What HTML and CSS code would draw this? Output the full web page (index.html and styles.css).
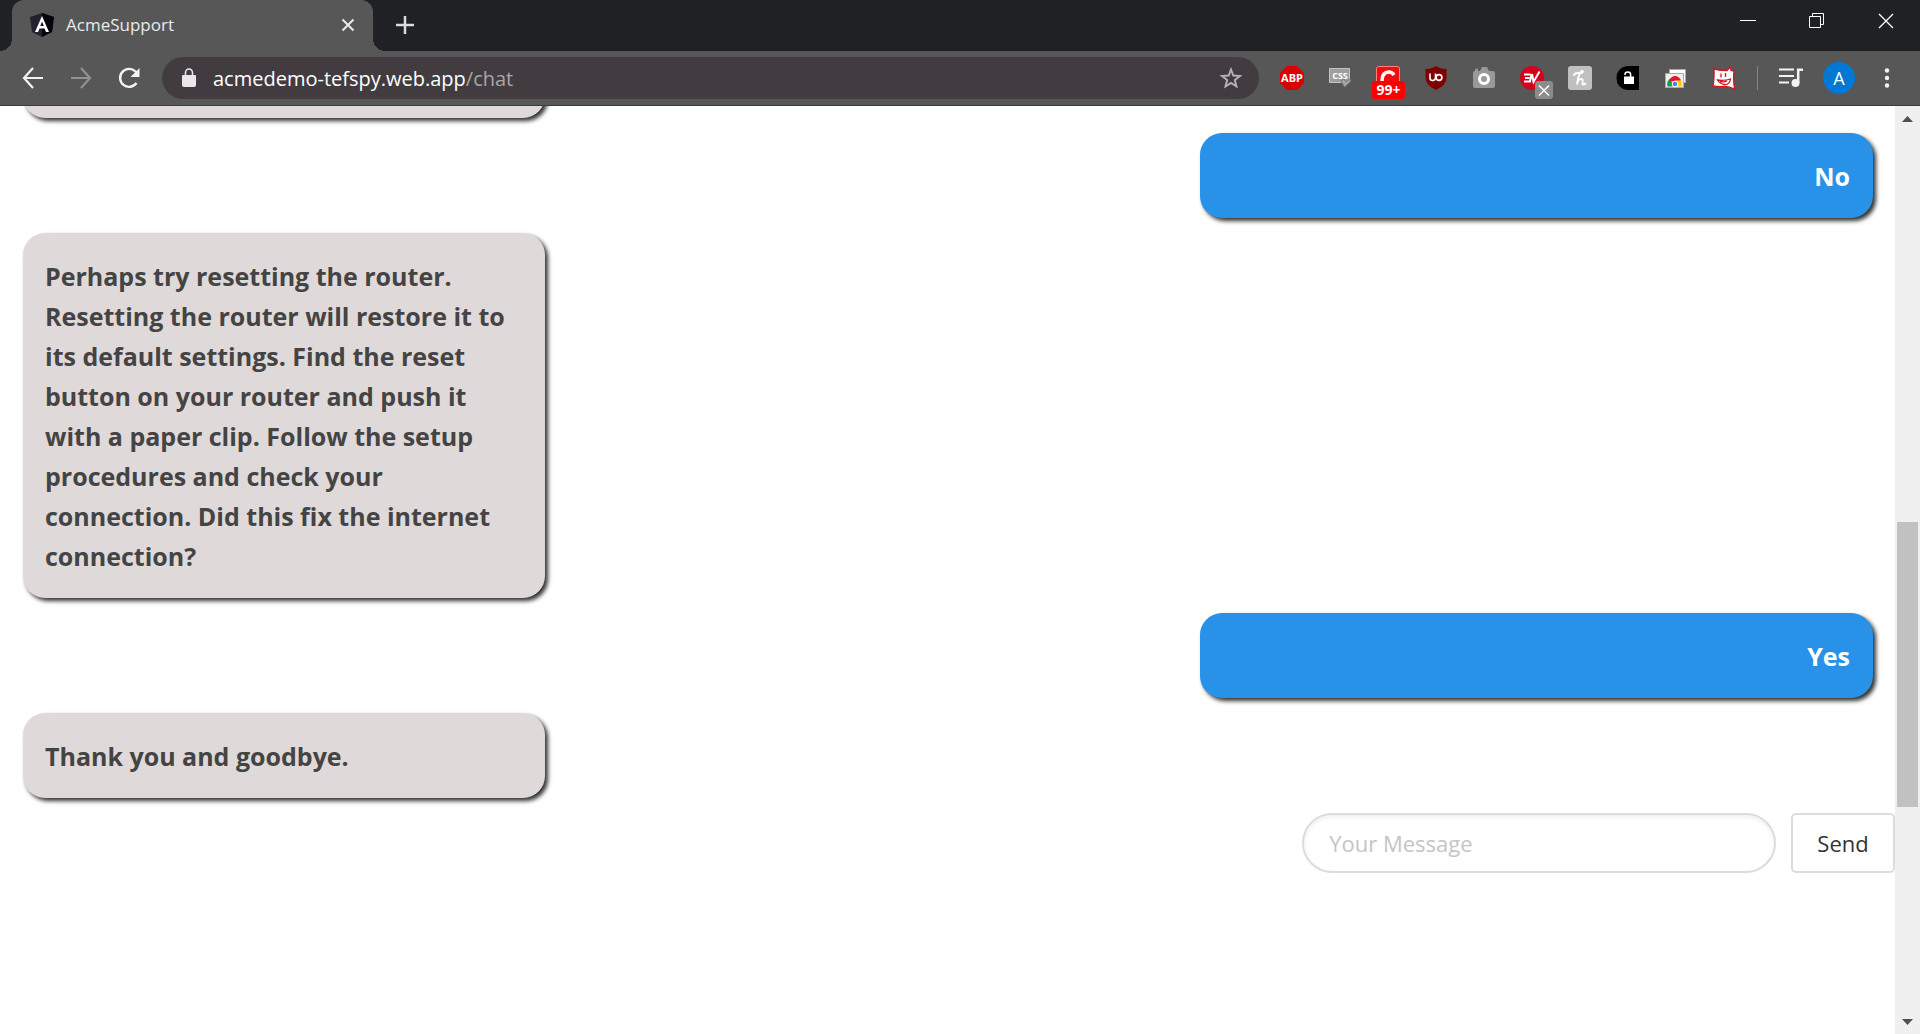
FILE: index.html
```html
<!DOCTYPE html>
<html lang="en">
<head>
<meta charset="utf-8">
<title>AcmeSupport</title>
<link rel="stylesheet" href="styles.css">
</head>
<body>
<header class="browser">
  <div class="tabstrip">
    <div class="tab">
      <svg class="icon" viewBox="0 0 24 24"><path d="M12 0 24 4 22 19 12 24 2 19 0 4z" fill="#23232f"/><path d="M12 0 24 4 22 19 12 24z" fill="#05050f"/><path d="M12 3 19 19h-3l-1.500-3.500h-5L8 19H5zM12 8.500 10.200 13h3.600z" fill="#fff" fill-rule="evenodd"/></svg>
      <span class="tab-title">AcmeSupport</span>
      <button class="plain" aria-label="Close tab"><svg class="icon" viewBox="0 0 24 24"><path d="M6.500 6.500l11 11M17.500 6.500l-11 11" stroke="#e8eaed" stroke-width="2" fill="none"/></svg></button>
    </div>
    <button class="plain new-tab" aria-label="New tab"><svg class="icon" viewBox="0 0 24 24"><path d="M12 3v18M3 12h18" stroke="#dadce0" stroke-width="2.500" fill="none"/></svg></button>
    <div class="window-controls">
      <button class="plain" aria-label="Minimize"><svg class="icon" viewBox="0 0 24 24"><path d="M4 11.500h16" stroke="#fff" fill="none"/></svg></button>
      <button class="plain" aria-label="Restore"><svg class="icon" viewBox="0 0 24 24"><path d="M4.500 7.500h11v11h-11zM7.500 7V4.500h11v11H16" stroke="#fff" fill="none"/></svg></button>
      <button class="plain" aria-label="Close"><svg class="icon" viewBox="0 0 24 24"><path d="M5 5l14 14M19 5 5 19" stroke="#fff" stroke-width="1.300" fill="none"/></svg></button>
    </div>
  </div>
  <div class="toolbar">
    <nav class="nav">
      <button class="plain" aria-label="Back"><svg class="icon" viewBox="0 0 24 24"><path d="M22 12H3.500M12 2 3 12l9 10" stroke="#f1f3f4" stroke-width="2.200" fill="none"/></svg></button>
      <button class="plain" aria-label="Forward"><svg class="icon" viewBox="0 0 24 24"><path d="M2 12h18.500M12 2l9 10-9 10" stroke="#929292" stroke-width="2.200" fill="none"/></svg></button>
      <button class="plain" aria-label="Reload"><svg class="icon" viewBox="0 0 24 24"><path d="M19.500 17A9 9 0 1 1 18.500 5.500L20 7" stroke="#f1f3f4" stroke-width="2.400" fill="none"/><path d="M22.500 2v9h-9z" fill="#f1f3f4"/></svg></button>
    </nav>
    <div class="omnibox">
      <svg class="icon" viewBox="0 0 24 24"><path d="M6 9h12q1 0 1 1v9q0 2-2 2H7q-2 0-2-2v-9q0-1 1-1z" fill="#e8e8e8"/><path d="M8.500 9.500V6.500a3.500 3.500 0 0 1 7 0v3" stroke="#e8e8e8" stroke-width="1.500" fill="none"/></svg>
      <span class="url">acmedemo-tefspy.web.app<span class="path">/chat</span></span>
      <button class="plain" aria-label="Bookmark"><svg class="icon" viewBox="0 0 24 24"><path d="M12 3.500 14.300 9.500 21 10 15.800 14 17.500 20.500 12 17 6.500 20.500 8.200 14 3 10 9.700 9.500z" stroke="#b5b3b5" stroke-width="1.900" fill="none"/></svg></button>
    </div>
    <div class="extensions">
      <button class="plain" aria-label="Adblock Plus"><svg class="icon" viewBox="0 0 24 24"><path d="M7 0h10l7 7v10l-7 7H7l-7-7V7z" fill="#db0000"/><text class="abp" x="12" y="16">ABP</text></svg></button>
      <button class="plain" aria-label="CSS viewer"><svg class="icon" viewBox="0 0 24 24"><path d="M1.500 2.500h20v14h-20z" fill="#9e9e9e" stroke="#c4c4c4"/><path d="m13 15 3-2 2 3 4-3 1 2-6.500 6z" fill="#a8a8a8" stroke="#777"/><text class="css-label" x="12" y="13">CSS</text></svg></button>
      <button class="plain" aria-label="Request counter"><svg class="icon" viewBox="0 0 24 24"><rect x=".5" y=".5" width="23" height="22" rx="2" fill="#f20d0d" stroke="#ff8080"/><path d="M6 15q0-9 7-9 3 0 5 3" stroke="#fff" stroke-width="3.500" fill="none"/></svg><span class="badge count">99+</span></button>
      <button class="plain" aria-label="uBlock Origin"><svg class="icon" viewBox="0 0 24 24"><path d="M12 0q4 3 10.500 3v9q0 7-10.500 12Q1.500 19 1.500 12V3Q8 3 12 0z" fill="#800000"/><path d="M6 7.500v4.500q0 2.500 2.500 2.500t3-2.500V7.500" stroke="#fff" stroke-width="1.600" fill="none"/><circle cx="15" cy="11.500" r="2.900" stroke="#fff" stroke-width="1.600" fill="none"/></svg></button>
      <button class="plain" aria-label="Screenshot"><svg class="icon" viewBox="0 0 24 24"><path d="M3 4q0-2 3-1.500V5h2l2-4h5l2 4h4q2 0 2 2v13q0 2-2 2H3q-2 0-2-2V7q0-2 2-2z" fill="#999"/><circle cx="12" cy="13" r="4.500" stroke="#fff" stroke-width="3" fill="#999"/></svg></button>
      <button class="plain" aria-label="Password vault"><svg class="icon" viewBox="0 0 24 24"><circle cx="12" cy="12" r="12" fill="#d6001c"/><path d="M4 8.500h6.500M5 12h4.500M4 15.500h6l1.500-7M12 8l1.500 8L19.500 5.500" stroke="#fff" stroke-width="2" fill="none"/></svg><span class="badge off"><svg class="off-icon" viewBox="0 0 18 18"><path d="M4 4.500l10 10M14 4.500l-10 10" stroke="#fff" stroke-width="1.500" fill="none"/></svg></span></button>
      <button class="plain" aria-label="Honey"><svg class="icon" viewBox="0 0 24 24"><rect width="24" height="24" rx="3" fill="#c0c0c0"/><path d="M6 10q0-3 4-3 5 .5 5-1.500-1-1.500-3 1.500-2 4-3 11.500 1-5.500 4-5.500 2.500 0 1.500 3.500-.5 2 1 2 1.500 0 2.500-1.500" stroke="#fff" stroke-width="1.800" fill="none"/></svg></button>
      <button class="plain" aria-label="Unlock"><svg class="icon" viewBox="0 0 24 24"><path d="M11 0h12v24H11Q.5 22 .5 12T11 0z" fill="#000"/><path d="M8 10.500h10v7.500H8z" fill="#fff"/><path d="M9 9V8.500q0-2.500 2.800-2.500t2.800 2.500V11" stroke="#fff" stroke-width="1.500" fill="none"/></svg></button>
      <button class="plain" aria-label="Window capture"><svg class="icon" viewBox="0 0 24 24"><path d="M5.500 3.500h16v13h-16z" fill="#fff" stroke="#aaa"/><path d="M1.500 7.500h18v14h-18z" fill="#eee" stroke="#aaa"/><path d="M3.500 20.500a7 7 0 0 1 3-8l3 8z" fill="#169b55"/><path d="M5 14.500q2.500-4.500 6-4.500 4 0 6 4.500l-6 1.500z" fill="#e0162b"/><path d="M11 14.500h6q1.500 3 .5 6H12z" fill="#fc0"/><circle cx="11" cy="18" r="2.800" fill="#4b7bec" stroke="#fff"/></svg></button>
      <button class="plain" aria-label="Comic"><svg class="icon" viewBox="0 0 24 24"><path d="M2 3q6 1.500 13 1.500L18.500 1l.5 3.500 3 .5q-1 7 .5 18-6-3-11-2.500T1 20q1.500-8 1-17z" fill="#fff" stroke="#d8131d" stroke-width="1.300"/><path d="M9 7.500v4M13.500 7v4M5.500 14q7 1 13-1-1 6-6 5.500Q8 18 5.500 14zM8 15.500q4 1 7-.5" stroke="#d8131d" stroke-width="1.300" fill="none"/></svg></button>
    </div>
    <div class="menus">
      <button class="plain" aria-label="Media controls"><svg class="icon" viewBox="0 0 24 24"><path d="M0 3.500h15M0 10h15M0 16.500h10" stroke="#f1f3f4" stroke-width="2" fill="none"/><circle cx="16.500" cy="17" r="4" fill="#f1f3f4"/><path d="M19.200 17V3.700H24" stroke="#f1f3f4" stroke-width="2.500" fill="none"/></svg></button>
      <button class="plain" aria-label="Profile"><span class="avatar">A</span></button>
      <button class="plain" aria-label="Menu"><svg class="icon" viewBox="0 0 24 24"><circle cx="12" cy="4.500" r="2.200" fill="#f1f3f4"/><circle cx="12" cy="12" r="2.200" fill="#f1f3f4"/><circle cx="12" cy="19.500" r="2.200" fill="#f1f3f4"/></svg></button>
    </div>
  </div>
</header>
<div class="viewport">
  <main class="chat">
    <div class="messages">
      <p class="bubble bot"></p>
      <p class="bubble user">No</p>
      <p class="bubble bot">Perhaps try resetting the router. Resetting the router will restore it to its default settings. Find the reset button on your router and push it with a paper clip. Follow the setup procedures and check your connection. Did this fix the internet connection?</p>
      <p class="bubble user">Yes</p>
      <p class="bubble bot">Thank you and goodbye.</p>
    </div>
    <form class="composer">
      <input class="field" type="text" placeholder="Your Message" aria-label="Your Message">
      <button class="send" type="button">Send</button>
    </form>
  </main>
  <div class="scrollbar">
    <svg class="arrow" viewBox="0 0 25 25"><path d="M7 16l5.500-6 5.500 6z" fill="#505050"/></svg>
    <div class="track-before"></div>
    <div class="thumb"></div>
    <div class="track-after"></div>
    <svg class="arrow" viewBox="0 0 25 25"><path d="M7 10l5.500 6 5.500-6z" fill="#505050"/></svg>
  </div>
</div>
</body>
</html>
```
FILE: styles.css
```css
* { box-sizing: border-box; }

body {
  margin: 0;
  height: 100vh;
  display: flex;
  flex-direction: column;
  overflow: hidden;
  background: #fff;
  color: #444;
  font-family: "Open Sans", "Noto Sans", sans-serif;
}

.icon { display: block; width: 24px; height: 24px; flex: none; }

.plain {
  display: flex;
  align-items: center;
  justify-content: center;
  position: relative;
  padding: 0;
  border: 0;
  background: none;
  font: inherit;
}

/* Tab strip */
.tabstrip {
  display: flex;
  height: 51px;
  padding-left: 12px;
  background: #202124;
}

.tab {
  position: relative;
  display: flex;
  align-items: center;
  gap: 12px;
  width: 361px;
  padding: 0 13px 2px 18px;
  border-radius: 12px 12px 0 0;
  background: #575757;
}

.tab::before,
.tab::after {
  content: "";
  position: absolute;
  bottom: 0;
  width: 12px;
  height: 12px;
}
.tab::before { right: 100%; background: radial-gradient(circle at 0 0, #202124 12px, #575757 12px); }
.tab::after { left: 100%; background: radial-gradient(circle at 100% 0, #202124 12px, #575757 12px); }

.tab-title { flex: 1; color: #e8eaed; font-size: 17px; }
.new-tab { width: 64px; padding-bottom: 2px; }

.window-controls { display: flex; margin-left: auto; }
.window-controls .plain { width: 69px; padding-bottom: 9px; }

/* Toolbar */
.toolbar {
  display: flex;
  align-items: center;
  height: 55px;
  padding: 0 9px 0 9px;
  border-bottom: 1px solid #3b3b3b;
  background: #575757;
}

.nav { display: flex; width: 153px; }
.nav .plain { width: 48px; height: 42px; }

.omnibox {
  flex: 1;
  display: flex;
  align-items: center;
  gap: 12px;
  height: 42px;
  padding: 0 16px 0 15px;
  border-radius: 21px;
  background: #423c40;
}
.url { flex: 1; color: #fff; font-size: 20px; }
.path { color: #a9a6a8; }

.extensions { display: flex; padding: 0 9px; border-right: 1px solid #858585; }
.extensions .plain { width: 48px; height: 24px; }

.abp { font: bold 11px "Noto Sans", sans-serif; fill: #fff; text-anchor: middle; }
.css-label { font: bold 9px "Open Sans", sans-serif; fill: #fff; text-anchor: middle; }

.badge {
  position: absolute;
  top: 15px;
  height: 18px;
  border-radius: 3px;
  color: #fff;
}
.count { left: 8px; width: 33px; background: #f00; font-size: 14px; font-weight: 700; line-height: 18px; }
.off { left: 27px; width: 18px; background: #8c8c8c; }
.off-icon { display: block; width: 18px; height: 18px; }

.menus { display: flex; padding-left: 9px; }
.menus .plain { width: 48px; height: 42px; }
.avatar {
  width: 32px;
  height: 32px;
  border-radius: 50%;
  background: #0078d4;
  color: #fff;
  font-size: 18px;
  line-height: 32px;
}

/* Page viewport */
.viewport { flex: 1; display: flex; min-height: 0; }
.chat { flex: 1; overflow: hidden; }

.messages {
  display: flex;
  flex-direction: column;
  gap: 15px;
  margin-top: -73px;
  padding: 0 22px 15px 23px;
}

.bubble {
  margin: 0;
  min-height: 85px;
  padding: 23px 23px 22px 22px;
  border-radius: 22px;
  box-shadow: 3px 3px 4px #333;
  font-size: 25px;
  font-weight: 700;
  line-height: 40px;
}
.bot { align-self: flex-start; width: 28.200%; background: #e0d9d9; }
.user { align-self: flex-end; width: 36.400%; background: #2792e7; color: #fff; text-align: right; }

.composer { display: flex; justify-content: flex-end; gap: 15px; }

.field,
.send {
  height: 60px;
  border: 2px solid #dcdcdc;
  background: #fff;
  font: 22px "Open Sans", "Noto Sans", sans-serif;
}
.field {
  width: 25%;
  padding: 0 25px;
  border-radius: 30px;
  box-shadow: inset 0 2px 4px #eee;
  color: #444;
}
.field::placeholder { color: #c5c5c5; opacity: 1; }
.send { width: 104px; padding: 0; border-radius: 5px; color: #333; }

/* Scrollbar */
.scrollbar {
  display: flex;
  flex-direction: column;
  width: 25px;
  background: #f0f0f0;
}
.arrow { display: block; width: 25px; height: 25px; flex: none; }
.track-before { flex: 391; }
.thumb { flex: 285; margin: 0 2px; background: #c1c1c1; }
.track-after { flex: 202; }
```
